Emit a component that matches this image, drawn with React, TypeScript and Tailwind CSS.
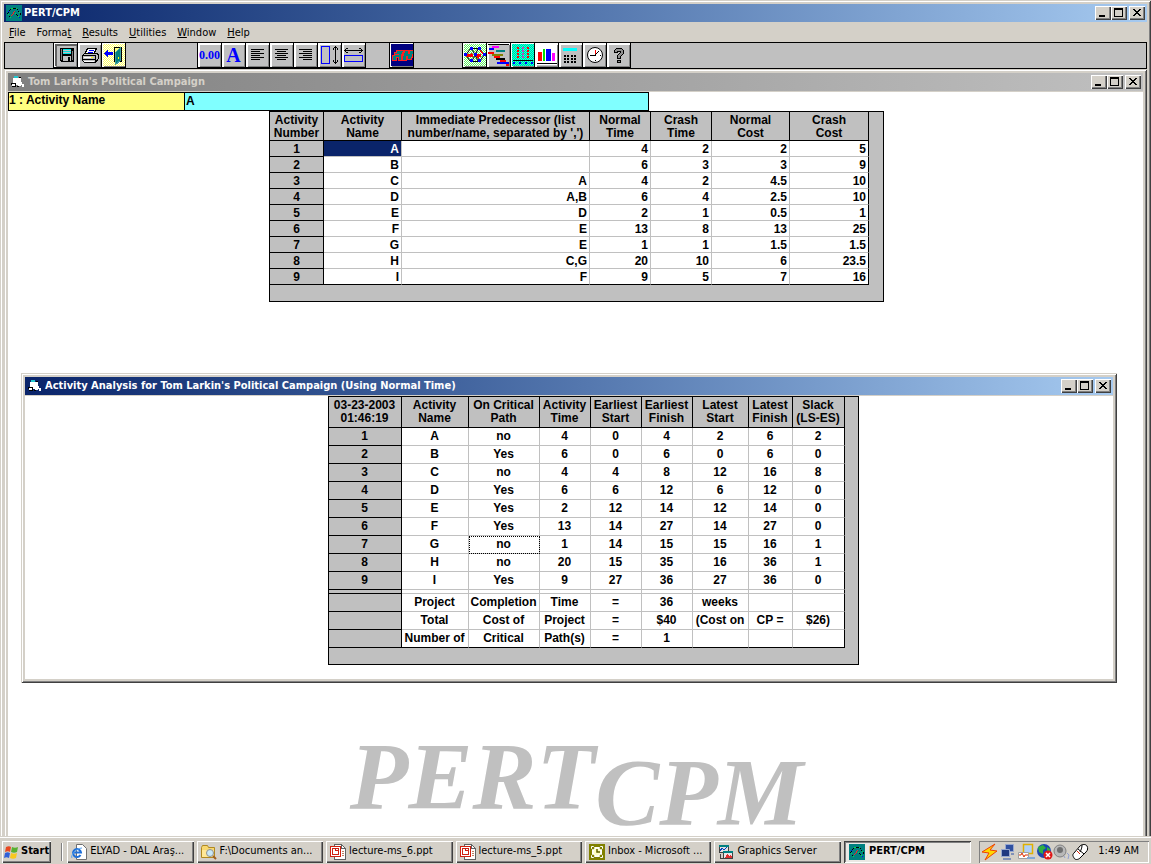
import React, { useState } from 'react';
import clsx from 'clsx';

const activities = [
  ['A', '', '4', '2', '2', '5'],
  ['B', '', '6', '3', '3', '9'],
  ['C', 'A', '4', '2', '4.5', '10'],
  ['D', 'A,B', '6', '4', '2.5', '10'],
  ['E', 'D', '2', '1', '0.5', '1'],
  ['F', 'E', '13', '8', '13', '25'],
  ['G', 'E', '1', '1', '1.5', '1.5'],
  ['H', 'C,G', '20', '10', '6', '23.5'],
  ['I', 'F', '9', '5', '7', '16'],
];

const analysis = [
  ['A', 'no', '4', '0', '4', '2', '6', '2'],
  ['B', 'Yes', '6', '0', '6', '0', '6', '0'],
  ['C', 'no', '4', '4', '8', '12', '16', '8'],
  ['D', 'Yes', '6', '6', '12', '6', '12', '0'],
  ['E', 'Yes', '2', '12', '14', '12', '14', '0'],
  ['F', 'Yes', '13', '14', '27', '14', '27', '0'],
  ['G', 'no', '1', '14', '15', '15', '16', '1'],
  ['H', 'no', '20', '15', '35', '16', '36', '1'],
  ['I', 'Yes', '9', '27', '36', '27', '36', '0'],
];

const summary = [
  ['Project', 'Completion', 'Time', '=', '36', 'weeks', '', ''],
  ['Total', 'Cost of', 'Project', '=', '$40', '(Cost on', 'CP =', '$26)'],
  ['Number of', 'Critical', 'Path(s)', '=', '1', '', '', ''],
];

const inputHeads = [
  ['Activity', 'Number', 'w-[54px]'],
  ['Activity', 'Name', 'w-[78px]'],
  ['Immediate Predecessor (list', "number/name, separated by ',')", 'w-[188px]'],
  ['Normal', 'Time', 'w-[61px]'],
  ['Crash', 'Time', 'w-[61px]'],
  ['Normal', 'Cost', 'w-[78px]'],
  ['Crash', 'Cost', 'w-[79px]'],
];

const resultHeads = [
  ['03-23-2003', '01:46:19', 'w-[73px]'],
  ['Activity', 'Name', 'w-[67px]'],
  ['On Critical', 'Path', 'w-[71px]'],
  ['Activity', 'Time', 'w-[51px]'],
  ['Earliest', 'Start', 'w-[51px]'],
  ['Earliest', 'Finish', 'w-[51px]'],
  ['Latest', 'Start', 'w-[56px]'],
  ['Latest', 'Finish', 'w-[44px]'],
  ['Slack', '(LS-ES)', 'w-[52px]'],
];

const raised =
  'bg-[#d4d0c8] shadow-[inset_1px_1px_0_#fff,inset_-1px_-1px_0_#404040,inset_-2px_-2px_0_#808080]';
const frame =
  'bg-[#d4d0c8] p-1 shadow-[inset_1px_1px_0_#d4d0c8,inset_-1px_-1px_0_#404040,inset_2px_2px_0_#fff,inset_-2px_-2px_0_#808080]';

type SvgProps = { children: React.ReactNode; size?: number };

function Pix({ children, size = 24 }: SvgProps) {
  return (
    <svg
      width={size}
      height={size}
      viewBox={`0 0 ${size} ${size}`}
      shapeRendering="crispEdges"
      fill="none"
      aria-hidden="true"
      className="block shrink-0"
    >
      {children}
    </svg>
  );
}

function AppIcon() {
  return (
    <Pix size={16}>
      <rect width="16" height="16" fill="#008080" />
      <path d="M1 8h1v1H1zM2 7h1v1H2zM3 5h1v1H3zM4 4h1v1H4zM7 3h3v1H7zM11 4h1v1h-1zM12 6h1v1h-1zM14 8h1v2h-1zM3 11h1v1H3zM10 9h1v1h-1zM11 10h1v1h-1z" fill="#000" />
      <path d="M5 3h2v1H5zM10 3h1v1h-1zM13 7h1v1h-1zM2 9h1v1H2zM4 12h1v1H4zM9 8h1v1H9zM12 11h1v1h-1z" fill="#00e040" />
      <path d="M5 10h1v1H5zM6 9h1v1H6zM7 7h1v2H7zM8 6h1v1H8z" fill="#ff2020" />
      <path d="M2 6h1v1H2zM13 12h1v1h-1z" fill="#0000ff" />
    </Pix>
  );
}

// Small document-and-disk glyph at the left of each child window title
function FormIcon() {
  return (
    <Pix size={16}>
      <path d="M3 4h8l1 7H5L3 8z" fill="#fff" />
      <path d="M4 2h4v2H4z" fill="#20c8d0" />
      <path d="M9 3h2v1H9z" fill="#000" />
      <path d="M1 9h5v4H2z" fill="#000" />
      <path d="M2 10h3v2H2z" fill="#fff" />
      <path d="M6 9h4l1 3H8z" fill="#fff" />
      <path d="M12 10h2v3h-2z" fill="#fff" />
      <path d="M7 12h2v1H7z" fill="#000" />
    </Pix>
  );
}

function WindowButtons() {
  const button = clsx('flex h-[14px] w-4 items-center justify-center', raised);
  return (
    <div className="ml-auto flex shrink-0">
      <button type="button" aria-label="Minimize" className={button}>
        <svg width="16" height="14" shapeRendering="crispEdges">
          <path d="M4 9h6v2H4z" />
        </svg>
      </button>
      <button type="button" aria-label="Maximize" className={button}>
        <svg width="16" height="14" shapeRendering="crispEdges">
          <path d="M3 2h9v9H3zM4 4v6h7V4z" fillRule="evenodd" />
        </svg>
      </button>
      <button type="button" aria-label="Close" className={clsx('ml-0.5', button)}>
        <svg width="16" height="14" shapeRendering="crispEdges">
          <path d="M4 3h2v1h1v1h2V4h1V3h2v1h-1v1h-1v1H9v1h1v1h1v1h1v1h-2V9H9V8H7v1H6v1H4V9h1V8h1V7h1V6H6V5H5V4H4z" />
        </svg>
      </button>
    </div>
  );
}

function TitleBar({ title, icon, active }: { title: string; icon: React.ReactNode; active: boolean }) {
  return (
    <div
      className={clsx(
        'flex h-[18px] shrink-0 items-center gap-0.5 overflow-hidden pr-0.5 pl-0.5 text-[11px] font-bold whitespace-nowrap',
        active
          ? 'bg-linear-to-r from-[#0a246a] to-[#a6caf0] text-white'
          : 'bg-linear-to-r from-[#808080] to-[#c0c0c0] text-[#d4d0c8]'
      )}
    >
      {icon}
      <span>{title}</span>
      <WindowButtons />
    </div>
  );
}

function GridHead({ heads, height }: { heads: string[][]; height: string }) {
  return (
    <thead>
      <tr className={height}>
        {heads.map(([top, bottom, width], i) => (
          <th key={i} className={clsx('border-r border-b border-black bg-[#c0c0c0] p-0 pt-0.5 align-top', width)}>
            {top}
            <br />
            {bottom}
          </th>
        ))}
      </tr>
    </thead>
  );
}

function InputGrid() {
  return (
    <div className="mx-auto w-fit border border-black bg-[#c0c0c0] pr-[14px] pb-4">
      <table className="table-fixed border-separate border-spacing-0 text-xs leading-[13px] font-bold whitespace-nowrap">
        <GridHead heads={inputHeads} height="h-[29px]" />
        <tbody>
          {activities.map((row, r) => (
            <tr key={r} className="h-4">
              <th className="border-r border-b border-black bg-[#c0c0c0] p-0 pt-px">{r + 1}</th>
              {row.map((cell, c) => (
                <td
                  key={c}
                  className={clsx(
                    'border-r border-b p-0 pt-px pr-0.5 text-right',
                    r === 0 && c === 0 ? 'bg-[#0a246a] text-white' : 'bg-white',
                    r === 8 ? 'border-b-black' : 'border-b-[#c0c0c0]',
                    c === 5 ? 'border-r-black' : 'border-r-[#c0c0c0]'
                  )}
                >
                  {cell}
                </td>
              ))}
            </tr>
          ))}
        </tbody>
      </table>
    </div>
  );
}

function ResultRow({ label, cells, last, focus }: { label: string; cells: string[]; last?: boolean; focus?: number }) {
  return (
    <tr className="h-[18px]">
      <th className="border-r border-b border-black bg-[#c0c0c0] p-0">{label}</th>
      {cells.map((cell, c) => (
        <td
          key={c}
          className={clsx(
            'border-r border-b bg-white p-0 text-center',
            last ? 'border-b-black' : 'border-b-[#c0c0c0]',
            c === 7 ? 'border-r-black' : 'border-r-[#c0c0c0]',
            c === focus && 'outline-1 -outline-offset-1 outline-black outline-dotted'
          )}
        >
          {cell}
        </td>
      ))}
    </tr>
  );
}

function ResultGrid() {
  return (
    <div className="mx-auto w-fit border border-black bg-[#c0c0c0] pr-[13px] pb-4">
      <table className="table-fixed border-separate border-spacing-0 text-xs leading-[13px] font-bold whitespace-nowrap">
        <GridHead heads={resultHeads} height="h-[31px]" />
        <tbody>
          {analysis.map((row, r) => (
            <ResultRow key={r} label={String(r + 1)} cells={row} focus={r === 6 ? 1 : undefined} />
          ))}
          <tr className="h-1" aria-hidden="true">
            <td className="border-r border-b border-black bg-[#c0c0c0] p-0" />
            {summary[0].map((_, c) => (
              <td
                key={c}
                className={clsx(
                  'border-r border-b border-b-[#c0c0c0] bg-white p-0',
                  c === 7 ? 'border-r-black' : 'border-r-[#c0c0c0]'
                )}
              />
            ))}
          </tr>
          {summary.map((row, r) => (
            <ResultRow key={r} label="" cells={row} last={r === 2} />
          ))}
        </tbody>
      </table>
    </div>
  );
}

function Tool({ label, children, className }: { label: string; children: React.ReactNode; className?: string }) {
  return (
    <button
      type="button"
      aria-label={label}
      title={label}
      className={clsx(
        'flex h-[25px] w-6 shrink-0 items-center overflow-hidden border-r border-b border-black shadow-[inset_1px_1px_0_#fff,inset_2px_2px_0_#fff,inset_-1px_-1px_0_#808080]',
        className
      )}
    >
      {children}
    </button>
  );
}

function Dither({ id, a, b }: { id: string; a: string; b: string }) {
  return (
    <>
      <pattern id={id} width="2" height="2" patternUnits="userSpaceOnUse">
        <rect width="2" height="2" fill={a} />
        <path d="M0 0h1v1H0zM1 1h1v1H1z" fill={b} />
      </pattern>
      <rect x="1" y="1" width="22" height="22" fill={`url(#${id})`} />
    </>
  );
}

function Toolbar() {
  return (
    <div className="flex h-[27px] shrink-0 overflow-hidden border border-black bg-[#c0c0c0] pl-12">
      <div className="flex border-l border-black">
        <Tool label="Save">
          <Pix>
            <path d="M1 1h22v2H3v20H1z" fill="#606060" />
            <path d="M6 5h14v14H7l-1-1z" fill="#000" />
            <path d="M9 6h8v5H9z" fill="#00e0e0" />
            <path d="M9 7.500h8M9 9.500h8" stroke="#c0c0c0" />
            <path d="M7 6h1v11H7zM18 8h1v9h-1z" fill="#808080" />
            <path d="M9 13h8v5H9z" fill="#c0c0c0" />
            <path d="M14 14h2v4h-2z" fill="#000" />
          </Pix>
        </Tool>
        <Tool label="Print">
          <Pix>
            <path d="M9.500 5.500h9l-3 6h-9z" fill="#fff" stroke="#000" />
            <path d="M11 7.500h5M10 9.500h5" stroke="#0000ff" />
            <path d="M4.500 12.500l2-2h12l2 1v4l-3 4h-11l-2-2z" fill="#c0c0c0" stroke="#000" />
            <path d="M4 12h13v1H4zM4 16h13v1H4zM17 12h1v7h-1z" fill="#000" />
            <path d="M6 14.500h8M6 18.500h10" stroke="#fff" />
            <path d="M13 14h2v1h-2z" fill="#ffff00" />
          </Pix>
        </Tool>
        <Tool label="Exit">
          <Pix>
            <Dither id="exitBg" a="#ffff60" b="#ffffff" />
            <path d="M12.500 4.500h7v14h-7z" fill="#ffff80" stroke="#000" />
            <path d="M13.500 9.500l5-5v13l-5 4z" fill="#008080" stroke="#40a0a0" />
            <path d="M16 14h1v2h-1z" fill="#ffff00" />
            <path d="M2 10h1V9h1V8h1V7h1v2h5v3H6v2H5v-1H4v-1H3v-1H2z" fill="#0000ff" />
          </Pix>
        </Tool>
      </div>
      <div className="ml-[71px] flex border-l border-black">
        <Tool label="Number format" className="justify-center">
          <span className="font-['Liberation_Serif',serif] text-xs leading-none font-bold text-[#0000ff]">0.00</span>
        </Tool>
        <Tool label="Font" className="justify-center">
          <span className="font-['Liberation_Serif',serif] text-xl leading-none font-bold text-[#0000ff]">A</span>
        </Tool>
        <Tool label="Align left">
          <Pix>
            <path d="M5 6.500h13M5 8.500h9M5 10.500h13M5 12.500h9M5 14.500h13M5 16.500h9" stroke="#000" />
          </Pix>
        </Tool>
        <Tool label="Align center">
          <Pix>
            <path d="M5 6.500h13M7 8.500h9M5 10.500h13M7 12.500h9M5 14.500h13M7 16.500h9" stroke="#000" />
          </Pix>
        </Tool>
        <Tool label="Align right">
          <Pix>
            <path d="M5 6.500h13M9 8.500h9M5 10.500h13M9 12.500h9M5 14.500h13M9 16.500h9" stroke="#000" />
          </Pix>
        </Tool>
        <Tool label="Row height">
          <Pix>
            <path d="M3.500 3.500h8v17h-8z" stroke="#0000ff" />
            <path d="M17 3h1v18h-1zM16 4h3v1h-3zM15 5h1v2h-1zM19 5h1v2h-1zM16 19h3v1h-3zM15 17h1v2h-1zM19 17h1v2h-1z" fill="#000" />
          </Pix>
        </Tool>
        <Tool label="Column width">
          <Pix>
            <path d="M2.500 12.500h18v6h-18z" stroke="#0000ff" />
            <path d="M2 7h19v1H2zM3 6h1v3H3zM4 5h2v1H4zM4 9h2v1H4zM19 6h1v3h-1zM17 5h2v1h-2zM17 9h2v1h-2z" fill="#000" />
          </Pix>
        </Tool>
      </div>
      <div className="ml-[23px] flex border-l border-black">
        <Tool label="Solve">
          <Pix>
            <rect x="1" y="1" width="22" height="22" fill="#000080" />
            <path d="M2 17v-5h2V9h2V7h7v2h-1v2h-1v6H8v-3H6v3z" fill="#008080" stroke="#ff2020" />
            <path d="M12 17v-5h1V9h1V7h4v3h1V7h4v4h-1v3h-1v2h-4v-3h-1v4z" fill="#008080" stroke="#ff2020" />
            <path d="M5 11h4v1H5z" fill="#ff2020" />
          </Pix>
        </Tool>
      </div>
      <div className="ml-12 flex border-l border-black">
        <Tool label="Network">
          <Pix>
            <Dither id="networkBg" a="#60f060" b="#ffffff" />
            <path
              d="M3 12l4-6h2l3 6-3 6H7zM12 12l3-6h2l4 6-4 6h-2zM8 5.500h8M8 18.500h8"
              stroke="#000"
              shapeRendering="auto"
            />
            <path d="M3 11h6v2H3zM14 11h3v2h-3zM13 12l3 4M17 7l3 4M8 10l2 2" fill="#ff0000" stroke="#ff0000" />
            <path d="M1 10h3v3H1zM7 4h3v3H7zM15 4h3v3h-3zM20 10h3v3h-3zM7 16h3v3H7zM15 16h3v3h-3zM11 10h3v3h-3z" fill="#0000ff" />
          </Pix>
        </Tool>
        <Tool label="Gantt chart">
          <Pix>
            <path d="M1 1h21v1H1z" fill="#000" />
            <path d="M5 3h7v2H5z" fill="#ff00ff" />
            <path d="M2 5h5v2H2z" fill="#0000ff" />
            <path d="M9 7h9v2H9z" fill="#008080" />
            <path d="M1 9h6v2H1z" fill="#ff0000" />
            <path d="M5 11h11v2H5z" fill="#808000" />
            <path d="M7 13h6v2H7z" fill="#ff0000" />
            <path d="M9 15h9v2H9z" fill="#000" />
            <path d="M13 17h6v2h-6z" fill="#ff0000" />
            <path d="M10 19h12v2H10z" fill="#0000ff" />
            <path d="M19 21h3v2h-3z" fill="#ff0000" />
          </Pix>
        </Tool>
        <Tool label="Schedule">
          <Pix>
            <Dither id="scheduleBg" a="#00e080" b="#00ffff" />
            <path d="M7 4v11M17 4v11" stroke="#ff0000" strokeWidth="2" strokeDasharray="2 1" />
            <path d="M12 4v11" stroke="#c040c0" strokeWidth="2" strokeDasharray="2 1" />
            <path d="M2 17h20v1H2z" fill="#000" />
            <path d="M2 20h20" stroke="#0000ff" strokeWidth="2" strokeDasharray="2 4" />
          </Pix>
        </Tool>
        <Tool label="Bar chart">
          <Pix>
            <path d="M1 1h21v21H1z" fill="#fff" />
            <path d="M2 20h20v1H2z" fill="#000" />
            <path d="M3 9h4v9H3z" fill="#ff0000" />
            <path d="M8 6h2v12H8z" fill="#00e000" />
            <path d="M11 6h5v12h-5z" fill="#0000ff" />
            <path d="M17 10h3v8h-3z" fill="#ff00ff" />
          </Pix>
        </Tool>
        <Tool label="Calculator">
          <Pix>
            <path d="M4 5h14v3H4z" fill="#00ffff" />
            <path d="M5 12h2v2H5zM8 12h2v2H8zM12 12h2v2h-2zM15 12h2v2h-2zM5 15h2v2H5zM8 15h2v2H8zM12 15h2v2h-2zM15 15h2v2h-2zM5 18h2v2H5zM8 18h2v2H8zM12 18h2v2h-2zM15 18h2v2h-2z" fill="#000" />
          </Pix>
        </Tool>
        <Tool label="Clock">
          <Pix>
            <circle cx="12" cy="12" r="7.500" fill="#fff" stroke="#000" shapeRendering="auto" />
            <path d="M12 12l4-4" stroke="#000" shapeRendering="auto" />
            <path d="M12 7h1v4h-1z" fill="#ff0000" />
            <path d="M7 12h6v1H7z" fill="#000" />
            <path d="M12 17h1v1h-1zM17 12h1v1h-1z" fill="#000" />
          </Pix>
        </Tool>
        <Tool label="Help">
          <Pix>
            <path
              d="M7.500 9.500v-2l2-2h5l2 2v3l-3 3v2h-3v-3l3-3v-1h-3v1zM10.500 17.500h3v2h-3z"
              fill="#909090"
              stroke="#000"
            />
          </Pix>
        </Tool>
      </div>
    </div>
  );
}

function PptIcon() {
  return (
    <Pix size={16}>
      <path d="M4.500.5h7l4 4v11h-11z" fill="#fff" stroke="#606060" />
      <path d="M11.500.5v4h4" stroke="#606060" />
      <path d="M0 2h11v11H0z" fill="#d02010" />
      <path d="M1 3h9v9H1z" fill="#fff" />
      <path d="M2 4h7v7H2z" fill="#d02010" />
      <path d="M3 5h2v2h3v3H3zM6 5h2v1H6z" fill="#fff" />
      <path d="M12 7.500h2M12 9.500h2M12 11.500h2" stroke="#c08060" />
    </Pix>
  );
}

const tasks = [
  {
    label: 'ELYAD - DAL Araş...',
    icon: (
      <svg width="16" height="16" viewBox="0 0 16 16" fill="none" aria-hidden="true" className="shrink-0">
        <path d="M5.500.5h6l4 4v11h-10z" fill="#fff" stroke="#707070" />
        <path d="M9.500 11a4 4 0 1 1 .5-2.500H3" stroke="#1e6fd8" strokeWidth="2" />
        <path d="M1 14C-1 12 5 4 11 4" stroke="#5aa5f0" />
      </svg>
    ),
  },
  {
    label: 'F:\\Documents an...',
    icon: (
      <svg width="16" height="16" viewBox="0 0 16 16" fill="none" aria-hidden="true" className="shrink-0">
        <path d="M.5 3.500l1-2h5l1 2h6v10H.5z" fill="#f8d870" stroke="#b08820" />
        <path d="M1 6h12v7H1z" fill="#ffe898" />
        <circle cx="9" cy="9" r="3.500" fill="#c8e8f8" stroke="#909090" />
        <path d="M12 12l3 3" stroke="#a06020" strokeWidth="2" />
      </svg>
    ),
  },
  { label: 'lecture-ms_6.ppt', icon: <PptIcon /> },
  { label: 'lecture-ms_5.ppt', icon: <PptIcon /> },
  {
    label: 'Inbox - Microsoft ...',
    icon: (
      <svg width="16" height="16" viewBox="0 0 16 16" fill="none" aria-hidden="true" className="shrink-0">
        <path d="M0 0h16v16H0z" fill="#808000" />
        <path d="M2.500 2.500h2l1 1h5l1-1h2v2l-1 1v5l1 1v2h-2l-1-1h-5l-1 1h-2v-2l1-1v-5l-1-1z" stroke="#fff" />
        <circle cx="8" cy="8" r="4" fill="#ffffc0" stroke="#fff" />
        <path d="M8 5v3h3" stroke="#606000" strokeWidth="1.500" />
      </svg>
    ),
  },
  {
    label: 'Graphics Server',
    icon: (
      <Pix size={16}>
        <path d="M1.500 1.500h9v7h-9z" fill="#e0e0e0" stroke="#404040" />
        <path d="M1 1h10v2H1z" fill="#008080" />
        <path d="M2 7l2-3 2 2 3-3" stroke="#0040c0" />
        <path d="M5.500 7.500h9v7h-9z" fill="#e8e8e8" stroke="#404040" />
        <path d="M5 7h10v2H5z" fill="#008080" />
        <path d="M7 14l2-4 2 2 2-2 1 4z" fill="#e03030" />
        <path d="M2 10h1v4h2v1H2z" fill="#404040" />
      </Pix>
    ),
  },
];

function TrayIcons() {
  return (
    <svg width="109" height="18" viewBox="0 0 109 18" fill="none" aria-hidden="true" className="shrink-0">
      {/* power */}
      <path d="M14 1L1 9l7 1-4 7L16 8l-7-1z" fill="#ffd800" stroke="#f04000" />
      {/* network computers */}
      <path d="M24.500 1.500h8v7h-8z" fill="#3050a0" stroke="#98a8d0" />
      <path d="M20.500 6.500h8v7h-8z" fill="#203880" stroke="#98a8d0" />
      <path d="M22 16h8M30 11h3" stroke="#8090b8" strokeWidth="2" />
      {/* desktop sync */}
      <path d="M42.500 1.500h9v9h-9z" fill="#b0d0f8" stroke="#e0b000" strokeWidth="1.500" />
      <path d="M37.500 9.500h10v6h-10z" fill="#fff" stroke="#a0a0a0" />
      <path d="M38 12h2l1-2 2 4 1-2h3" stroke="#e03000" />
      <path d="M46 15h8" stroke="#80a8d8" strokeWidth="2" />
      {/* globe */}
      <circle cx="63" cy="8" r="7" fill="#1848b0" />
      <path d="M57 4l5-2 3 3-3 2v4l-4-2zM66 4l3 2v4l-3-1z" fill="#30b040" />
      <circle cx="67" cy="12" r="4.500" fill="#e01818" />
      <path d="M65 10l4 4M69 10l-4 4" stroke="#fff" strokeWidth="1.500" />
      {/* speaker */}
      <circle cx="79" cy="8" r="6" fill="#b8b8b8" stroke="#808080" />
      <circle cx="79" cy="7" r="3" fill="#707070" />
      <path d="M86 10l2 2-1 4M83 13l1 2" stroke="#90a0d0" />
      {/* mouse */}
      <path d="M93 10l6-7c2-2 6-2 7 0s1 4-1 6l-6 6c-2 2-5 2-6 0s-2-3 0-5z" fill="#fff" stroke="#000" />
      <path d="M97 6l6 5M101 2c0 3-1 5-2 7" stroke="#000" />
      <path d="M96 8l3 3" stroke="#e02000" />
    </svg>
  );
}

function Taskbar() {
  return (
    <footer className="flex h-7 shrink-0 items-center border-t border-[#d4d0c8] bg-[#d4d0c8] px-0.5 pt-0.5 text-[11px] shadow-[inset_0_1px_0_#fff]">
      <button type="button" className={clsx('flex h-[22px] shrink-0 items-center gap-px px-0.5 font-bold', raised)}>
        <svg width="16" height="16" viewBox="0 0 16 16" aria-hidden="true" className="shrink-0">
          <path d="M2 3c2-1 4-1 5 0L6 8C5 7 3 7 1 8z" fill="#e84820" />
          <path d="M8 3c2 1 4 1 6 0l-1 5c-2 1-4 1-6 0z" fill="#58b030" />
          <path d="M1 9c2-1 3-1 5 0l-1 5c-2-1-3-1-5 0z" fill="#3060d8" />
          <path d="M7 9c2 1 4 1 6 0l-1 5c-2 1-4 1-6 0z" fill="#f8c820" />
        </svg>
        Start
      </button>
      <div className="mr-1 ml-2.5 h-[18px] w-0.5 shrink-0 border-r border-l border-r-white border-l-[#808080]" />
      <div className="flex min-w-0 flex-1 gap-[3px]">
        {tasks.map((task) => (
          <button
            key={task.label}
            type="button"
            className={clsx('flex h-[22px] min-w-0 flex-1 items-center gap-[3px] overflow-hidden pl-1 whitespace-nowrap', raised)}
          >
            {task.icon}
            {task.label}
          </button>
        ))}
        <button
          type="button"
          className="flex h-[22px] min-w-0 flex-1 items-center gap-1 overflow-hidden bg-[#eae8e4] pl-[5px] font-bold whitespace-nowrap shadow-[inset_1px_1px_0_#404040,inset_-1px_-1px_0_#fff,inset_2px_2px_0_#808080]"
        >
          <AppIcon />
          PERT/CPM
        </button>
      </div>
      <div className="ml-2 flex h-[22px] shrink-0 items-center gap-2 pr-2.5 pl-0.5 shadow-[inset_1px_1px_0_#808080,inset_-1px_-1px_0_#fff]">
        <TrayIcons />
        <span>1:49 AM</span>
      </div>
    </footer>
  );
}

const menus = [
  ['', 'F', 'ile'],
  ['Forma', 't', ''],
  ['', 'R', 'esults'],
  ['', 'U', 'tilities'],
  ['', 'W', 'indow'],
  ['', 'H', 'elp'],
];

export default function App() {
  const [entry, setEntry] = useState('A');

  return (
    <div className="flex h-screen flex-col overflow-hidden bg-[#d4d0c8] font-['DejaVu_Sans_Condensed','DejaVu_Sans',sans-serif] text-black">
      <div className="min-h-0 flex-1">
        {/* Main window runs on below the taskbar */}
        <div className={clsx('flex h-[calc(100%+8px)] flex-col', frame)}>
          <TitleBar title="PERT/CPM" icon={<AppIcon />} active />

          <nav className="flex h-5 shrink-0 items-center gap-[11px] pt-0.5 pl-[5px] text-[11px]">
            {menus.map(([before, key, after]) => (
              <button key={before + key + after} type="button">
                {before}
                <span className="underline">{key}</span>
                {after}
              </button>
            ))}
          </nav>

          <Toolbar />

          <section className={clsx('flex min-h-0 flex-1 flex-col', frame)}>
            <TitleBar title="Tom Larkin's Political Campaign" icon={<FormIcon />} active={false} />
            <div className="mt-px min-h-0 flex-1 bg-white font-['Liberation_Sans',sans-serif]">
              <div className="flex h-[19px] w-[641px] border border-black text-xs leading-[15px] font-bold">
                <label htmlFor="entry" className="w-44 border-r border-black bg-[#ffff80]">
                  1 : Activity Name
                </label>
                <input
                  id="entry"
                  value={entry}
                  onChange={(e) => setEntry(e.target.value)}
                  className="min-w-0 flex-1 bg-[#80ffff] pl-px outline-none"
                />
              </div>

              <div className="pl-0.5">
                <InputGrid />
              </div>

              <section className={clsx('mt-[71px] mr-[26px] ml-[13px]', frame)}>
                <div className="font-['DejaVu_Sans_Condensed','DejaVu_Sans',sans-serif]">
                  <TitleBar
                    title="Activity Analysis for Tom Larkin's Political Campaign (Using Normal Time)"
                    icon={<FormIcon />}
                    active
                  />
                </div>
                <div className="mt-px bg-white pb-[14px] pl-12">
                  <ResultGrid />
                </div>
              </section>

              <div className="mt-[52px] flex justify-center pl-0.5 font-['Liberation_Serif',serif] text-8xl leading-[84px] font-bold text-[#c0c0c0] italic">
                <span>PERT</span>
                <span className="pt-4">CPM</span>
              </div>
            </div>
          </section>
        </div>
      </div>

      <Taskbar />
    </div>
  );
}
